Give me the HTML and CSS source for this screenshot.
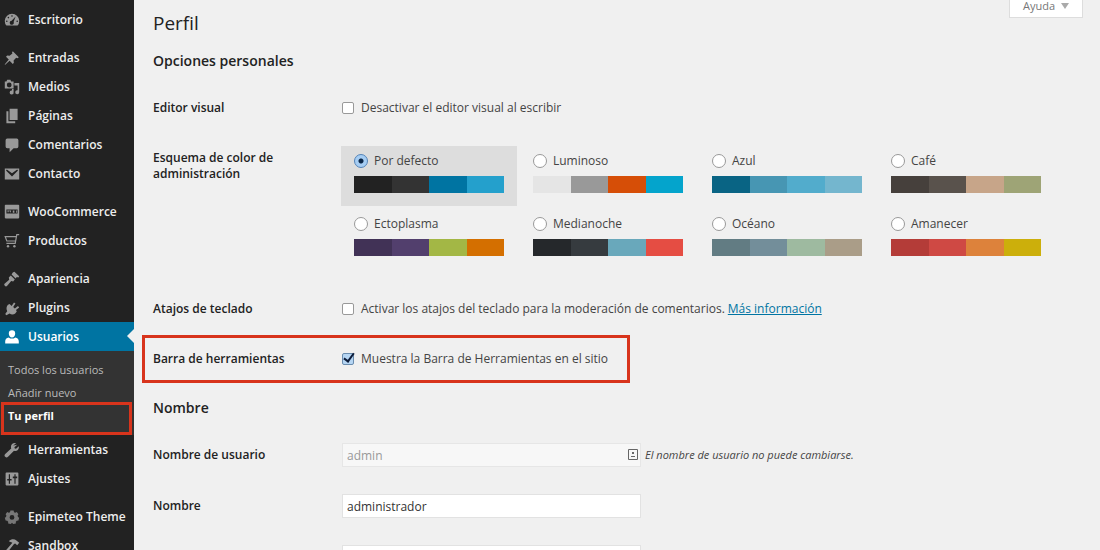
FILE: index.html
```html
<!DOCTYPE html>
<html lang="es">
<head>
<meta charset="utf-8">
<title>Perfil</title>
<link rel="stylesheet" href="styles.css">
</head>
<body>
<div class="shell">
  <nav class="menu" aria-label="Menú principal">
    <a class="item" href="#"><svg class="icon" viewBox="0 0 20 20"><path fill-rule="evenodd" d="M3 17A9 9 0 1 1 17 17ZM10 4a1 1 0 1 0 0 2 1 1 0 0 0 0-2ZM5.500 6a1 1 0 1 0 0 2 1 1 0 0 0 0-2ZM3.500 10.500a1 1 0 1 0 0 2 1 1 0 0 0 0-2ZM16.500 10.500a1 1 0 1 0 0 2 1 1 0 0 0 0-2ZM14.500 5.500L9.500 11a2.500 2.500 0 1 0 2.500 1.500Z"/></svg>Escritorio</a>
    <div class="sep"></div>
    <a class="item" href="#"><svg class="icon" viewBox="0 0 20 20"><path d="M11 1.500l7.500 7.500-1.500 1.200-1.800-.4-3.200 3.400.3 2.800-1.300 1.500-4-4L1.500 18.500.8 18 6 12 2.500 8.500 4 7l3 .3L10.500 4.500 10 3Z"/></svg>Entradas</a>
    <a class="item" href="#"><svg class="icon" viewBox="0 0 20 20"><path fill-rule="evenodd" d="M1 3h2l1-2h4l1 2h3v9H1ZM6.500 4.500a3 3 0 1 0 0 6 3 3 0 0 0 0-6Z"/><path d="M13 5h6v11.500a2.500 2.500 0 1 1-2-2.500V8h-4ZM10 12.500h2v4a2.500 2.500 0 1 1-2-2Z"/></svg>Medios</a>
    <a class="item" href="#"><svg class="icon" viewBox="0 0 20 20"><path d="M7 1h10v14H7ZM3 4h2.500v12.500H14V19H3Z"/></svg>Páginas</a>
    <a class="item" href="#"><svg class="icon" viewBox="0 0 20 20"><path d="M4 2h12a2 2 0 0 1 2 2v8a2 2 0 0 1-2 2h-4l-5 5v-5H4a2 2 0 0 1-2-2V4a2 2 0 0 1 2-2Z"/></svg>Comentarios</a>
    <a class="item" href="#"><svg class="icon" viewBox="0 0 20 20"><path fill-rule="evenodd" d="M1 3h18v14H1ZM2.500 5.500L10 13l7.500-7.500-1-1L10 9 3.500 4.500Z"/></svg>Contacto</a>
    <div class="sep"></div>
    <a class="item" href="#"><svg class="icon" viewBox="0 0 20 20"><path fill-rule="evenodd" d="M2 1h16a1 1 0 0 1 1 1v15a1 1 0 0 1-1 1H2a1 1 0 0 1-1-1V2a1 1 0 0 1 1-1ZM3 7v5h14V7Z"/><path d="M4 8l1 3 1.500-3L8 11l1-3M11 8h2v3h-2ZM15 8h1v3h-1Z"/></svg>WooCommerce</a>
    <a class="item" href="#"><svg class="icon" viewBox="0 0 20 20"><path class="line" d="M19 2h-3l-2 11H3M15 4.500H1.500l2 5.500H14"/><circle cx="5" cy="16.500" r="1.500"/><circle cx="13" cy="16.500" r="1.500"/></svg>Productos</a>
    <div class="sep"></div>
    <a class="item" href="#"><svg class="icon" viewBox="0 0 20 20"><path d="M11 2l2-1 6 5.500-1 1.500-2-.5-1.500 2L9.500 4.500ZM8.500 5.500l5 5-2 2.500-2.500-.5L4 18.500a2 2 0 0 1-3-3L6.500 11 6 8Z"/></svg>Apariencia</a>
    <a class="item" href="#"><svg class="icon" viewBox="0 0 20 20"><path d="M5 6l2-1 2.500 2.500 3-4.500 1.800 1.400-2.800 4.300 2 2 4-3.200L19 9.300l-4 3.200 1 2-2 2.500c-2 1.500-5 1.500-7 0L3 19l-1.500-1.500L4 14C2.500 11 3 8 5 6Z"/></svg>Plugins</a>
    <a class="item current" href="#" aria-current="true"><svg class="icon" viewBox="0 0 20 20"><path d="M10 1.500a4 4 0 0 1 4 4c0 2.500-1.500 5-4 5s-4-2.500-4-5a4 4 0 0 1 4-4ZM6 10.500c2 2 6 2 8 0 3 .5 4.500 2 4.500 5V18h-17v-2.500c0-3 1.500-4.500 4.500-5Z"/></svg>Usuarios</a>
    <div class="submenu">
      <a class="subitem" href="#">Todos los usuarios</a>
      <a class="subitem" href="#">Añadir nuevo</a>
      <a class="subitem active" href="#">Tu perfil</a>
    </div>
    <a class="item" href="#"><svg class="icon" viewBox="0 0 20 20"><path d="M16.500 3.500l-3.500 3 .5 1.500 1.500.3 3.500-3c.8 4-2.500 7-6 5.700L5 18.500a2.300 2.300 0 0 1-3.500-3.500L9 8C7.500 4 11 .500 15 1.500l-3.500 3Z"/></svg>Herramientas</a>
    <a class="item" href="#"><svg class="icon" viewBox="0 0 20 20"><path fill-rule="evenodd" d="M3 2h14a1 1 0 0 1 1 1v14a1 1 0 0 1-1 1H3a1 1 0 0 1-1-1V3a1 1 0 0 1 1-1ZM6 4v6H4v2h2v4h1.500v-4h2v-2h-2V4ZM13 4v3h-2v2h2v7h1.500V9h2V7h-2V4Z"/></svg>Ajustes</a>
    <div class="sep"></div>
    <a class="item" href="#"><svg class="icon dim" viewBox="0 0 20 20"><path fill-rule="evenodd" d="M8 2h4l.5 2 1.500.8 2-1 2 2.700-1 1.700.5 1.800 1.500 1-1 3.500-2 .2-1.200 1.300V18l-3.300.8-1.500-1.500-1.500 1.500L5.200 18v-2L4 14.700l-2-.2L1 11l1.500-1L3 8.200 2 6.500l2-2.700 2 1L7.500 4ZM10 7.500a3 3 0 1 0 0 6 3 3 0 0 0 0-6Z"/></svg>Epimeteo Theme</a>
    <a class="item" href="#"><svg class="icon" viewBox="0 0 20 20"><path d="M6 4c3-3 7-3 9.500-1L19 6l-2.500 3-2.500-2-1.500.5L3.500 19 1 17l9.500-11Z"/></svg>Sandbox</a>
  </nav>

  <main class="content">
    <button class="help" type="button">Ayuda<span class="caret"></span></button>
    <h1 class="title">Perfil</h1>
    <form class="form">
      <h2 class="heading">Opciones personales</h2>
      <div class="row">
        <div class="name">Editor visual</div>
        <label class="option"><input class="check" type="checkbox">Desactivar el editor visual al escribir</label>
      </div>
      <div class="row schemes-row">
        <div class="name" id="scheme">Esquema de color de administración</div>
        <div class="schemes" role="radiogroup" aria-labelledby="scheme">
          <label class="scheme selected"><span class="pick"><input class="radio" type="radio" name="c" checked>Por defecto</span><span class="swatch default"><i></i><i></i><i></i><i></i></span></label>
          <label class="scheme"><span class="pick"><input class="radio" type="radio" name="c">Luminoso</span><span class="swatch light"><i></i><i></i><i></i><i></i></span></label>
          <label class="scheme"><span class="pick"><input class="radio" type="radio" name="c">Azul</span><span class="swatch blue"><i></i><i></i><i></i><i></i></span></label>
          <label class="scheme"><span class="pick"><input class="radio" type="radio" name="c">Café</span><span class="swatch coffee"><i></i><i></i><i></i><i></i></span></label>
          <label class="scheme"><span class="pick"><input class="radio" type="radio" name="c">Ectoplasma</span><span class="swatch ecto"><i></i><i></i><i></i><i></i></span></label>
          <label class="scheme"><span class="pick"><input class="radio" type="radio" name="c">Medianoche</span><span class="swatch midnight"><i></i><i></i><i></i><i></i></span></label>
          <label class="scheme"><span class="pick"><input class="radio" type="radio" name="c">Océano</span><span class="swatch ocean"><i></i><i></i><i></i><i></i></span></label>
          <label class="scheme"><span class="pick"><input class="radio" type="radio" name="c">Amanecer</span><span class="swatch sunrise"><i></i><i></i><i></i><i></i></span></label>
        </div>
      </div>
      <div class="row">
        <div class="name">Atajos de teclado</div>
        <div class="option"><input class="check" type="checkbox" id="keys"><label for="keys">Activar los atajos del teclado para la moderación de comentarios.</label><a class="link" href="#">Más información</a></div>
      </div>
      <div class="row marked">
        <div class="name">Barra de herramientas</div>
        <label class="option"><input class="check" type="checkbox" checked>Muestra la Barra de Herramientas en el sitio</label>
      </div>
      <h2 class="heading second">Nombre</h2>
      <div class="row field-row">
        <label class="name" for="user">Nombre de usuario</label>
        <div class="field"><span class="box"><input class="text" id="user" type="text" value="admin" disabled><svg class="card" viewBox="0 0 10 11"><path d="M.500.500h9v10h-9ZM3 7.500h4"/><path class="dot" d="M4 3h2v2H4Z"/></svg></span><em class="hint">El nombre de usuario no puede cambiarse.</em></div>
      </div>
      <div class="row field-row">
        <label class="name" for="first">Nombre</label>
        <div class="field"><input class="text" id="first" type="text" value="administrador"></div>
      </div>
      <div class="row field-row">
        <span class="name"></span>
        <div class="field"><input class="text" type="text" aria-label="Apellidos"></div>
      </div>
    </form>
  </main>
</div>
</body>
</html>
```
FILE: styles.css
```css
*, *::after { box-sizing: border-box; }
body {
  margin: 0;
  background: #f0f0f0;
  color: #444;
  font: 12px/16px "Open Sans", sans-serif;
}
.shell {
  display: flex;
  height: 100vh;
  overflow: hidden;
}

/* Side menu */
.menu {
  flex: 0 0 134px;
  padding-top: 5px;
  background: #222;
}
.item {
  position: relative;
  display: flex;
  align-items: center;
  gap: 8px;
  height: 29px;
  padding-left: 4px;
  color: #eee;
  font-weight: 600;
  text-decoration: none;
  white-space: nowrap;
}
.icon {
  flex: none;
  width: 16px;
  height: 16px;
  fill: #999;
}
.icon .line { fill: none; stroke: #999; stroke-width: 1.5; }
.dim { fill: #777; }
.sep { height: 9px; }
.current { background: #0074a2; color: #fff; }
.current .icon { fill: #fff; }
.current::after {
  content: "";
  position: absolute;
  right: 0;
  top: 7px;
  border: 7px solid transparent;
  border-left: 0;
  border-right-color: #f0f0f0;
}
.submenu {
  height: 84px;
  padding-top: 7px;
  background: #333;
}
.subitem {
  position: relative;
  display: block;
  padding-left: 8px;
  color: #bbb;
  font-size: 11px;
  line-height: 23px;
  text-decoration: none;
}
.active { color: #fff; font-weight: 700; }
.active::after {
  content: "";
  position: absolute;
  inset: -2px 2px -8px 1px;
  border: 3px solid #d8341c;
}

/* Content */
.content {
  position: relative;
  flex: 1;
  min-width: 0;
  padding: 9px 19px 0;
}
.help {
  position: absolute;
  top: 0;
  right: 17px;
  display: flex;
  align-items: center;
  gap: 6px;
  height: 18px;
  padding: 0 13px 6px;
  border: 1px solid #ddd;
  border-top: 0;
  background: #fff;
  color: #777;
  font: 11px/12px "Open Sans", sans-serif;
}
.caret {
  border: 4px solid transparent;
  border-top: 6px solid #aaa;
  border-bottom: 0;
}
.title {
  margin: 0;
  color: #222;
  font-size: 19px;
  font-weight: 400;
  line-height: 28px;
}
.heading {
  margin: 0;
  padding: 12px 0 23px;
  color: #222;
  font-size: 14px;
  font-weight: 600;
  line-height: 24px;
}
.row {
  position: relative;
  display: grid;
  grid-template-columns: 189px 1fr;
  align-items: start;
  padding: 4px 0 30px;
}
.name {
  padding-right: 50px;
  color: #222;
  font-weight: 600;
}
.option {
  display: flex;
  align-items: center;
}
.check, .radio {
  appearance: none;
  flex: none;
  margin: 0 7px 0 0;
  border: 1px solid #999;
  background: #fff;
}
.check {
  width: 12px;
  height: 12px;
  border-radius: 2px;
}
.check:checked {
  position: relative;
  border-color: #6a8cae;
  background: #b5d5f3;
}
.check:checked::after {
  content: "";
  position: absolute;
  left: 3px;
  top: -3px;
  width: 6px;
  height: 11px;
  border: solid #0c1c3a;
  border-width: 0 2px 2px 0;
  transform: rotate(36deg);
}
.radio {
  width: 14px;
  height: 14px;
  margin-right: 6px;
  border-radius: 50%;
}
.radio:checked {
  border-color: #5383b8;
  background: radial-gradient(circle, #0c2748 2px, #a6cdf3 3px);
}
.link {
  margin-left: 3px;
  color: #0074a2;
}
.schemes-row { padding-bottom: 28px; }
.schemes {
  display: grid;
  grid-template-columns: repeat(auto-fill, 176px);
  gap: 3px;
  margin: -4px 0 0 -1px;
}
.scheme {
  height: 60px;
  padding: 7px 13px 13px;
}
.selected { background: #ddd; }
.pick {
  display: flex;
  align-items: center;
  height: 16px;
}
.swatch {
  display: flex;
  height: 17px;
  margin-top: 7px;
}
.swatch i { flex: 1; }
.default i:nth-child(1) { background: #222; }
.default i:nth-child(2) { background: #333; }
.default i:nth-child(3) { background: #0074a2; }
.default i:nth-child(4) { background: #24a0cc; }
.light i:nth-child(1) { background: #e5e5e5; }
.light i:nth-child(2) { background: #999; }
.light i:nth-child(3) { background: #d64e07; }
.light i:nth-child(4) { background: #04a4cc; }
.blue i:nth-child(1) { background: #096484; }
.blue i:nth-child(2) { background: #4796b3; }
.blue i:nth-child(3) { background: #52accc; }
.blue i:nth-child(4) { background: #74b6ce; }
.coffee i:nth-child(1) { background: #46403c; }
.coffee i:nth-child(2) { background: #59524c; }
.coffee i:nth-child(3) { background: #c7a589; }
.coffee i:nth-child(4) { background: #9ea476; }
.ecto i:nth-child(1) { background: #413256; }
.ecto i:nth-child(2) { background: #523f6d; }
.ecto i:nth-child(3) { background: #a3b745; }
.ecto i:nth-child(4) { background: #d46f00; }
.midnight i:nth-child(1) { background: #25282b; }
.midnight i:nth-child(2) { background: #363b3f; }
.midnight i:nth-child(3) { background: #69a8bb; }
.midnight i:nth-child(4) { background: #e54d43; }
.ocean i:nth-child(1) { background: #627c83; }
.ocean i:nth-child(2) { background: #738e9a; }
.ocean i:nth-child(3) { background: #9ebaa0; }
.ocean i:nth-child(4) { background: #aa9d88; }
.sunrise i:nth-child(1) { background: #b43c38; }
.sunrise i:nth-child(2) { background: #cf4944; }
.sunrise i:nth-child(3) { background: #dd823b; }
.sunrise i:nth-child(4) { background: #ccaf0b; }
.marked { padding-bottom: 29px; }
.marked::after {
  content: "";
  position: absolute;
  left: -11px;
  top: -12px;
  width: 488px;
  height: 48px;
  border: 3px solid #d8341c;
  pointer-events: none;
}

/* Text fields */
.second { padding-top: 0; }
.field-row { padding-bottom: 31px; }
.field {
  display: flex;
  align-items: center;
  gap: 4px;
  height: 24px;
  margin: -4px 0;
}
.box { position: relative; display: flex; }
.text {
  width: 299px;
  height: 24px;
  padding: 0 4px;
  border: 1px solid #e2e2e2;
  background: #fff;
  color: #333;
  font: 12px/16px "Open Sans", sans-serif;
}
.text:disabled {
  border-color: #e6e6e6;
  background: #f7f7f7;
  color: #999;
}
.card {
  position: absolute;
  right: 3px;
  top: 6px;
  width: 10px;
  height: 11px;
  fill: none;
  stroke: #666;
}
.card .dot { fill: #666; stroke: none; }
.hint { font-size: 11px; color: #444; }
```
